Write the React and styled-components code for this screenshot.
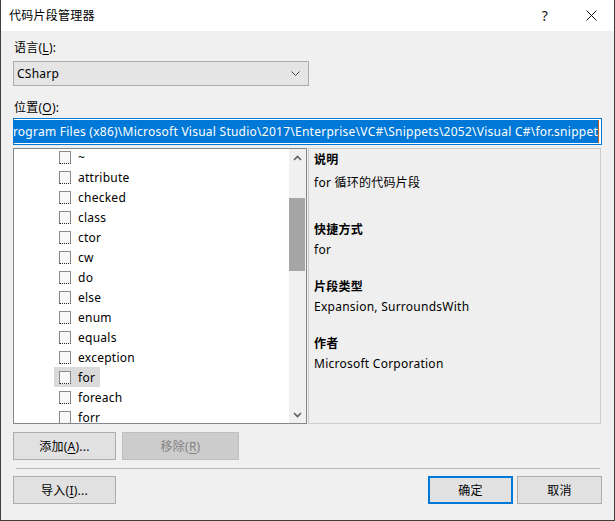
import React from "react";
import styled, { createGlobalStyle } from "styled-components";

const Global = createGlobalStyle`
  html, body { margin: 0; padding: 0; background: #f0f0f0; }
  * { box-sizing: border-box; }
  body {
    font-family: "Noto Sans", "Noto Sans CJK SC", sans-serif;
    font-size: 12px;
    letter-spacing: 0.25px;
    color: #000;
  }
`;

const Window = styled.div`
  width: 615px;
  height: 521px;
  background: #f0f0f0;
  border: 1px solid #3f3f3f;
  border-top: none;
  display: flex;
  flex-direction: column;
  overflow: hidden;
`;

const TitleBar = styled.div`
  height: 31px;
  background: #fff;
  display: flex;
  align-items: center;
  padding-left: 8px;
  flex-shrink: 0;
`;

const Title = styled.div`
  flex: 1;
  font-size: 12px;
  line-height: 16px;
`;

const CaptionButton = styled.div`
  width: 46px;
  height: 31px;
  display: flex;
  align-items: center;
  justify-content: center;
  font-size: 14px;
  color: #111;
`;

const Body = styled.div`
  flex: 1;
  display: flex;
  flex-direction: column;
  padding: 0 12px 0 12px;
`;

const Label = styled.div`
  line-height: 16px;
  height: 16px;
  margin-top: ${(p) => p.$mt}px;
  padding-left: 1px;
`;

const U = styled.span`
  text-decoration: underline;
  text-underline-offset: 2px;
`;

const Combo = styled.div`
  margin-top: 5px;
  width: 296px;
  height: 25px;
  background: #e5e5e5;
  border: 1px solid #adadad;
  display: flex;
  align-items: center;
  padding: 0 8px 0 3px;
  justify-content: space-between;
`;

const TextBox = styled.div`
  margin-top: 2px;
  height: 27px;
  border: 1px solid #0078d7;
  background: #fff;
  padding: 1px 2px 1px 1px;
  display: flex;
  justify-content: flex-end;
  overflow: hidden;
`;

const Selection = styled.span`
  background: #0078d7;
  color: #fff;
  white-space: nowrap;
  display: flex;
  align-items: center;
  flex-shrink: 0;
`;

const Caret = styled.span`
  width: 1px;
  align-self: stretch;
  background: #c06020;
  flex-shrink: 0;
`;

const Panels = styled.div`
  margin-top: 3px;
  height: 276px;
  display: flex;
  gap: 1px;
`;

const ListBox = styled.div`
  width: 294px;
  border: 1px solid #828790;
  background: #fff;
  display: flex;
  overflow: hidden;
`;

const ListViewport = styled.div`
  flex: 1;
  overflow: hidden;
`;

const ListItems = styled.div`
  margin-top: -2px;
  padding-left: 40px;
`;

const Row = styled.div`
  height: 20px;
  display: flex;
  align-items: center;
`;

const Item = styled.div`
  display: flex;
  align-items: center;
  height: 20px;
  padding: 0 5px;
  gap: 7px;
  background: ${(p) => (p.$selected ? "#dadada" : "transparent")};
`;

const Check = styled.span`
  width: 12px;
  height: 13px;
  border: 1px solid #8a8a8a;
  border-bottom: 1px dotted #222;
  background: #f8f8f8;
  flex-shrink: 0;
`;

const ScrollBar = styled.div`
  width: 17px;
  background: #f0f0f0;
  display: flex;
  flex-direction: column;
`;

const ScrollArrow = styled.div`
  height: 17px;
  display: flex;
  align-items: center;
  justify-content: center;
`;

const Track = styled.div`
  flex: 1;
  padding-top: 32px;
`;

const Thumb = styled.div`
  height: 73px;
  margin: 0 1px 0 0;
  background: #a6a6a6;
`;

const InfoPanel = styled.div`
  width: 293px;
  border: 1px solid #cdcdcd;
  background: #efefef;
  padding: 1px 5px 0 5px;
`;

const Field = styled.div`
  margin-bottom: ${(p) => (p.$first ? 0 : 17)}px;
`;

const Heading = styled.div`
  font-weight: bold;
  line-height: 20px;
`;

const Value = styled.div`
  line-height: 20px;
  padding-top: ${(p) => (p.$tall ? 3 : 0)}px;
  min-height: ${(p) => (p.$tall ? 50 : 20)}px;
`;

const ButtonRow = styled.div`
  margin-top: ${(p) => p.$mt}px;
  display: flex;
  gap: ${(p) => p.$gap || 6}px;
`;

const Spacer = styled.div`
  flex: 1;
`;

const Button = styled.div`
  width: ${(p) => p.$w}px;
  height: 28px;
  display: flex;
  align-items: center;
  justify-content: center;
  background: ${(p) => (p.$disabled ? "#cccccc" : "#e1e1e1")};
  border: ${(p) =>
    p.$default ? "2px solid #0078d7" : p.$disabled ? "1px solid #bfbfbf" : "1px solid #adadad"};
  color: ${(p) => (p.$disabled ? "#838383" : "#000")};
`;

const Separator = styled.div`
  margin: 8px 2px 0 3px;
  height: 1px;
  background: #b9b9b9;
`;

const items = [
  "~",
  "attribute",
  "checked",
  "class",
  "ctor",
  "cw",
  "do",
  "else",
  "enum",
  "equals",
  "exception",
  "for",
  "foreach",
  "forr",
];

const Chevron = ({ up }) => (
  <svg width="9" height="6" viewBox="0 0 9 6">
    <path
      d={up ? "M1 5 L4.5 1.5 L8 5" : "M1 1 L4.5 4.5 L8 1"}
      fill="none"
      stroke="#606060"
      strokeWidth="1.6"
    />
  </svg>
);

export default function App() {
  return (
    <>
      <Global />
      <Window>
        <TitleBar>
          <Title>代码片段管理器</Title>
          <CaptionButton>?</CaptionButton>
          <CaptionButton>
            <svg width="11" height="11" viewBox="0 0 11 11">
              <path d="M0.5 0.5 L10.5 10.5 M10.5 0.5 L0.5 10.5" stroke="#111" strokeWidth="1" />
            </svg>
          </CaptionButton>
        </TitleBar>
        <Body>
          <Label $mt={9}>
            语言(<U>L</U>):
          </Label>
          <Combo>
            <span>CSharp</span>
            <svg width="9" height="6" viewBox="0 0 9 6">
              <path d="M0.5 0.5 L4.5 4.5 L8.5 0.5" fill="none" stroke="#444" strokeWidth="1" />
            </svg>
          </Combo>
          <Label $mt={14}>
            位置(<U>O</U>):
          </Label>
          <TextBox>
            <Selection>
              C:\Program Files (x86)\Microsoft Visual Studio\2017\Enterprise\VC#\Snippets\2052\Visual C#\for.snippet
            </Selection>
            <Caret />
          </TextBox>
          <Panels>
            <ListBox>
              <ListViewport>
                <ListItems>
                  {items.map((t) => (
                    <Row key={t}>
                      <Item $selected={t === "for"}>
                        <Check />
                        <span>{t}</span>
                      </Item>
                    </Row>
                  ))}
                </ListItems>
              </ListViewport>
              <ScrollBar>
                <ScrollArrow>
                  <Chevron up />
                </ScrollArrow>
                <Track>
                  <Thumb />
                </Track>
                <ScrollArrow>
                  <Chevron />
                </ScrollArrow>
              </ScrollBar>
            </ListBox>
            <InfoPanel>
              <Field $first>
                <Heading>说明</Heading>
                <Value $tall>for 循环的代码片段</Value>
              </Field>
              <Field>
                <Heading>快捷方式</Heading>
                <Value>for</Value>
              </Field>
              <Field>
                <Heading>片段类型</Heading>
                <Value>Expansion, SurroundsWith</Value>
              </Field>
              <Field>
                <Heading>作者</Heading>
                <Value>Microsoft Corporation</Value>
              </Field>
            </InfoPanel>
          </Panels>
          <ButtonRow $mt={8}>
            <Button $w={103}>
              添加(<U>A</U>)...
            </Button>
            <Button $w={117} $disabled>
              移除(<U>R</U>)
            </Button>
          </ButtonRow>
          <Separator />
          <ButtonRow $mt={7} $gap={4}>
            <Button $w={103}>
              导入(<U>I</U>)...
            </Button>
            <Spacer />
            <Button $w={85} $default>
              确定
            </Button>
            <Button $w={85}>取消</Button>
          </ButtonRow>
        </Body>
      </Window>
    </>
  );
}
